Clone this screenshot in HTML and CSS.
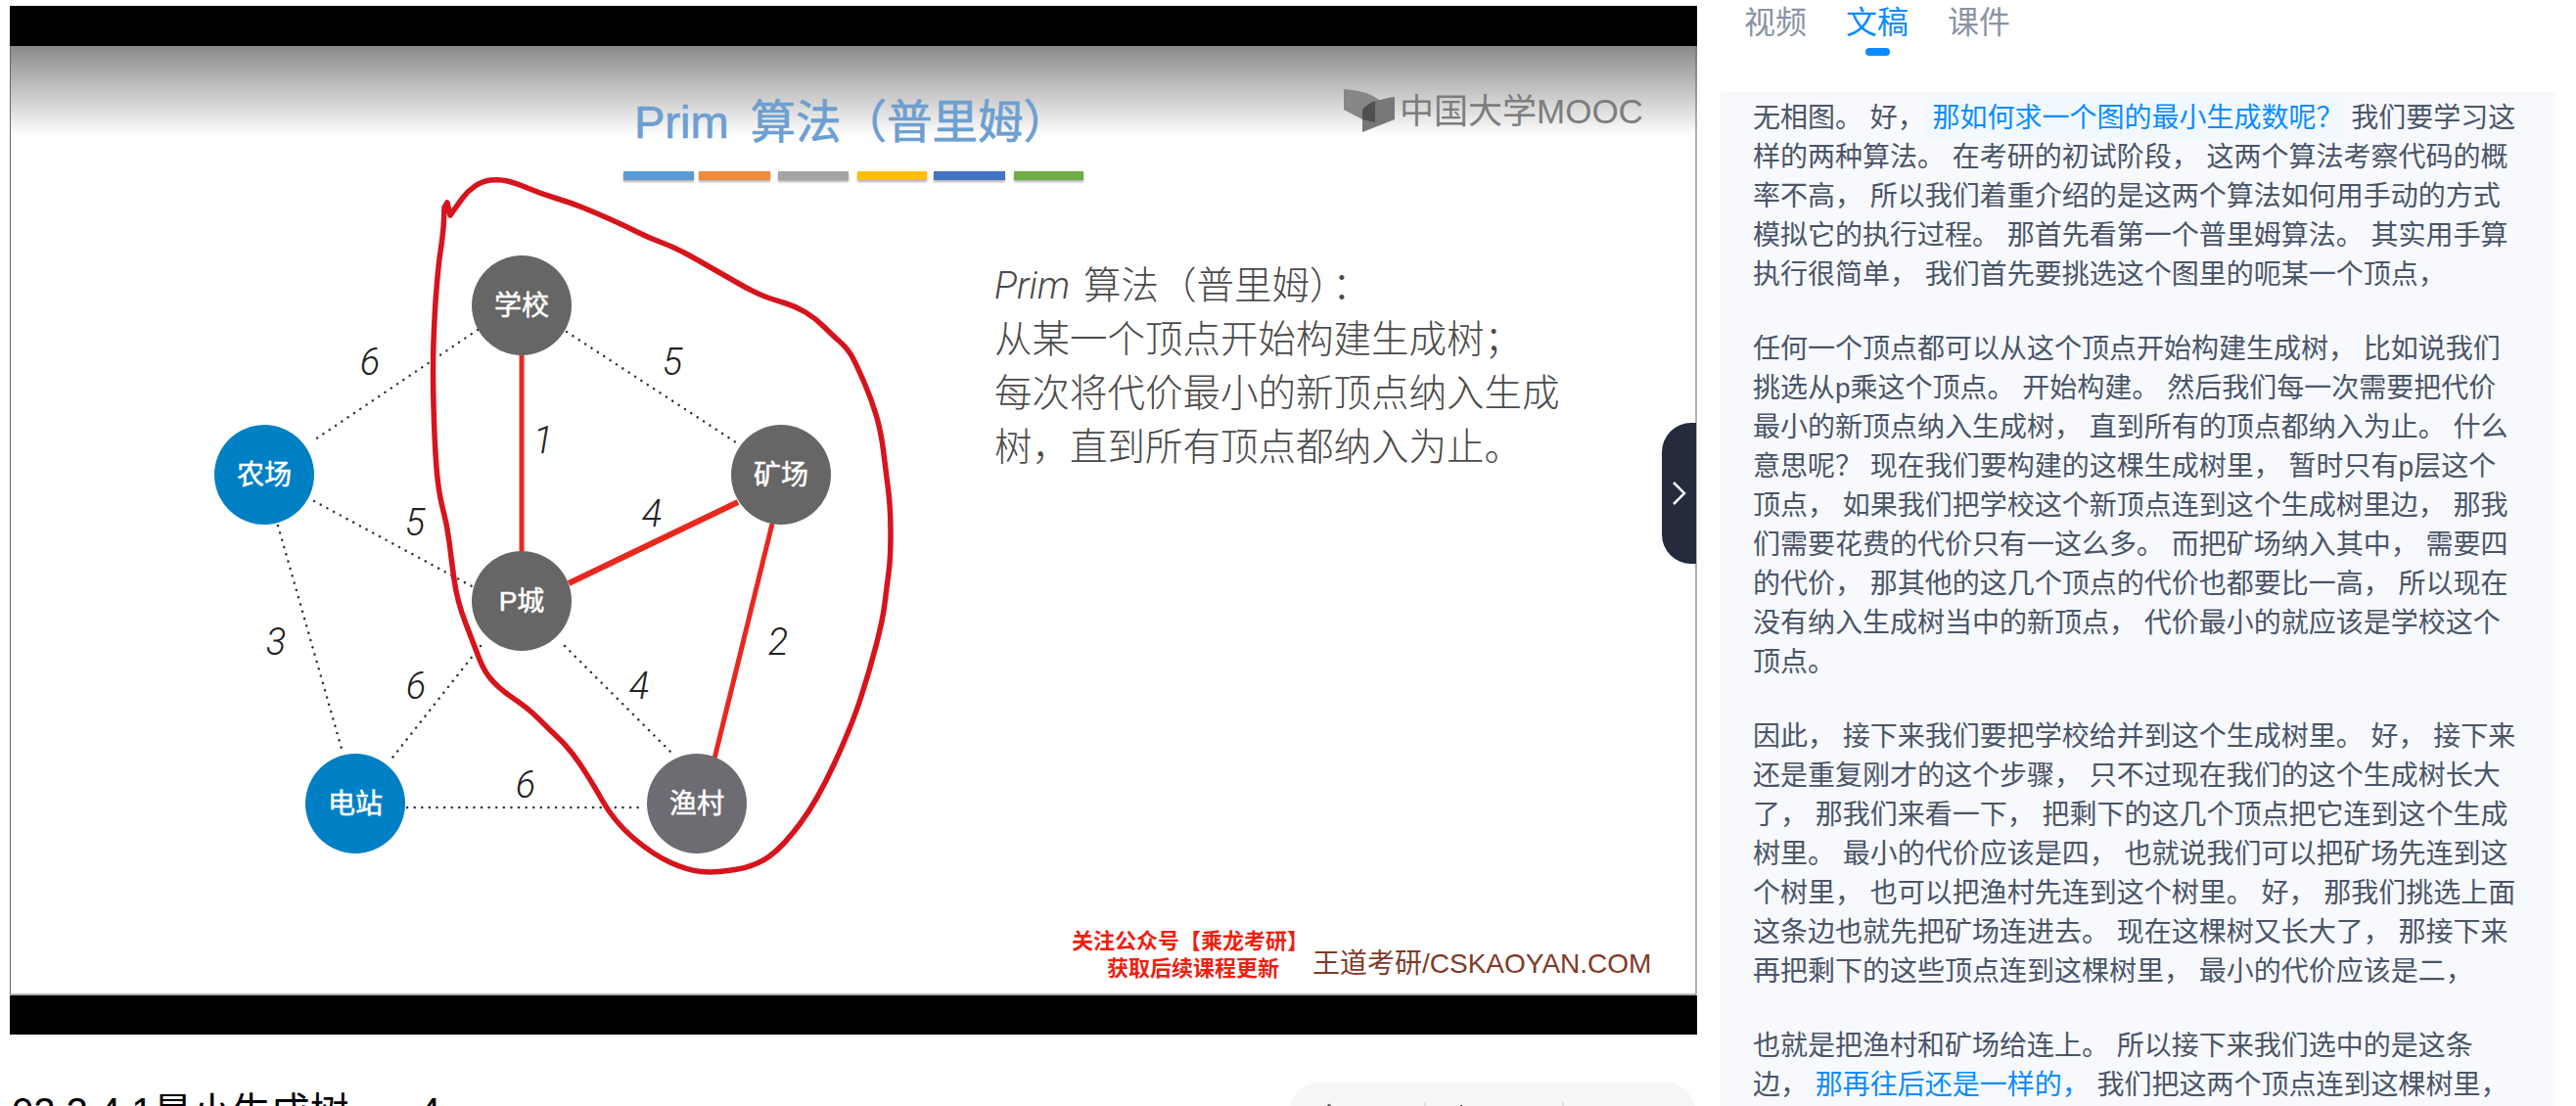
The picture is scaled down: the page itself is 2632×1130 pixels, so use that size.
FILE: index.html
```html
<!DOCTYPE html>
<html lang="zh-CN">

<head>
    <meta charset="UTF-8">
    <title>02.2.4.1最小生成树</title>
    <link rel="stylesheet" href="styles.css">
</head>

<body>
    <div class="page">
        <main class="lesson">
            <div class="player">
                <!-- viewBox uses page coordinates so the slide is easy to compare -->
                <svg class="slide" viewBox="10 47 1724 970" width="1724" height="970">
                    <defs>
                        <linearGradient id="slide-top" x1="0" y1="0" x2="0" y2="1">
                            <stop offset="0" stop-color="#8a8a8a" />
                            <stop offset="0.5" stop-color="#c4c4c4" />
                            <stop offset="1" stop-color="#ffffff" />
                        </linearGradient>
                    </defs>
                    <rect x="10" y="47" width="1724" height="970" fill="#fff" />
                    <rect x="10" y="47" width="1724" height="92" fill="url(#slide-top)" />
                    <path class="slide-edge" d="M10.5 47V1016H1733V47" />

                    <text class="slide-title" x="648" y="141"><tspan class="title-latin">Prim</tspan><tspan dx="22">算法（普里姆）</tspan></text>
                    <g class="title-bars">
                        <rect x="637" y="175" width="72" height="9" fill="#5b9bd5" />
                        <rect x="714" y="175" width="73" height="9" fill="#ed8b3a" />
                        <rect x="795" y="175" width="72" height="9" fill="#a5a5a5" />
                        <rect x="876" y="175" width="71" height="9" fill="#ffc000" />
                        <rect x="954" y="175" width="73" height="9" fill="#4472c4" />
                        <rect x="1036" y="175" width="71" height="9" fill="#70ad47" />
                    </g>

                    <g class="logo-mark">
                        <path d="M1373 91Q1396 92 1411 103L1392 122L1373 112Z" fill="#868686" />
                        <path d="M1392 135V112Q1402 102 1425 99V122Z" fill="#777" />
                        <path d="M1392 112Q1397 106 1405 103V125L1392 122Z" fill="#505050" />
                    </g>
                    <text class="logo-text" x="1430" y="126">中国大学MOOC</text>

                    <!-- dotted edges -->
                    <g class="edges-dotted">
                        <line x1="488" y1="337" x2="319" y2="451" />
                        <line x1="579" y1="339" x2="752" y2="452" />
                        <line x1="321" y1="512" x2="484" y2="600" />
                        <line x1="284" y1="537" x2="349" y2="765" />
                        <line x1="491" y1="660" x2="401" y2="774" />
                        <line x1="577" y1="660" x2="688" y2="771" />
                        <line x1="416" y1="825" x2="653" y2="825" />
                    </g>

                    <!-- chosen edges -->
                    <g class="edges-chosen">
                        <line x1="533" y1="362" x2="533" y2="563" />
                        <line class="edge-thick" x1="581" y1="596" x2="754" y2="513" />
                        <line x1="789" y1="535" x2="730" y2="775" />
                    </g>

                    <g class="nodes">
                        <circle cx="533" cy="312" r="51" class="node-done" />
                        <circle cx="270" cy="485" r="51" class="node-new" />
                        <circle cx="798" cy="485" r="51" class="node-done" />
                        <circle cx="533" cy="614" r="51" class="node-done" />
                        <circle cx="363" cy="821" r="51" class="node-new" />
                        <circle cx="712" cy="821" r="51" class="node-done node-last" />
                    </g>
                    <g class="node-labels">
                        <text x="533" y="322">学校</text>
                        <text x="270" y="495">农场</text>
                        <text x="798" y="495">矿场</text>
                        <text x="533" y="624">P城</text>
                        <text x="363" y="831">电站</text>
                        <text x="712" y="831">渔村</text>
                    </g>

                    <g class="weights">
                        <text x="378" y="383">6</text>
                        <text x="687" y="383">5</text>
                        <text x="555" y="463">1</text>
                        <text x="424" y="547">5</text>
                        <text x="666" y="538">4</text>
                        <text x="282" y="669">3</text>
                        <text x="795" y="669">2</text>
                        <text x="425" y="714">6</text>
                        <text x="653" y="714">4</text>
                        <text x="537" y="815">6</text>
                    </g>

                    <!-- hand drawn outline -->
                    <path class="scribble" d="M460 220Q467 210 472.5 202.5Q478 195 485.5 190Q493 185 501.5 184Q510 183 518.5 185Q527 187 540 192.5Q553 198 568 202.5Q583 207 596.5 212.5Q610 218 623.5 224Q637 230 650 236.5Q663 243 676.5 248Q690 253 703.5 260.5Q717 268 730 275.5Q743 283 758 291.5Q773 300 783 303.5Q793 307 803 310Q813 313 823 319Q833 325 841.5 333.5Q850 342 858.5 349.5Q867 357 872 367Q877 377 883.5 392Q890 407 895 423.5Q900 440 902.5 460Q905 480 907.5 500Q910 520 910 545Q910 570 908 585Q906 600 904 616.5Q902 633 895 660Q888 687 879 714.5Q870 742 852.5 780Q835 818 817.5 841.5Q800 865 786 875Q772 885 751 888.5Q730 892 716 890.5Q702 889 684.5 881Q667 873 647.5 856.5Q628 840 615.5 818Q603 796 592.5 780.5Q582 765 571.5 755Q561 745 550.5 734.5Q540 724 526 714.5Q512 705 503.5 696Q495 687 489.5 672.5Q484 658 475.5 636Q467 614 464 592Q461 570 459 553.5Q457 537 452.5 520Q448 503 446 478Q444 453 443 415Q442 377 443 348.5Q444 320 446 295Q448 270 450.5 253.5Q453 237 453.5 224.5L454 212L457 207L460 220" />

                    <g class="slide-body">
                        <text x="1016" y="305"><tspan class="prim">Prim</tspan><tspan dx="14">算法（普里姆）</tspan><tspan dx="4">：</tspan></text>
                        <text x="1016" y="360">从某一个顶点开始构建生成树；</text>
                        <text x="1016" y="415">每次将代价最小的新顶点纳入生成</text>
                        <text x="1016" y="470">树，直到所有顶点都纳入为止。</text>
                    </g>

                    <g class="promo">
                        <text x="1216" y="969">关注公众号【乘龙考研】</text>
                        <text x="1219" y="997">获取后续课程更新</text>
                    </g>
                    <text class="site-mark" x="1341" y="994">王道考研/CSKAOYAN.COM</text>
                </svg>

                <button class="panel-toggle" type="button" aria-label="收起">
                    <svg width="16" height="26" viewBox="0 0 16 26">
                        <path d="M2 2L13 13L2 24" />
                    </svg>
                </button>
            </div>

            <div class="lesson-bar">
                <h1>02.2.4.1最小生成树 <span class="part">- 4</span></h1>
                <div class="actions">
                    <span class="action action-share">
                        <svg class="action-icon" width="24" height="24" viewBox="0 0 24 24">
                            <path d="M12 2L12 20M5 9L12 2L19 9" />
                        </svg>
                        分享
                    </span>
                    <span class="action action-save">
                        <svg class="action-icon" width="24" height="24" viewBox="0 0 24 24">
                            <path d="M12 2L12 18M5 11L12 18L19 11M3 22H21" />
                        </svg>
                        下载
                    </span>
                    <span class="action action-more">更多</span>
                </div>
            </div>
        </main>

        <aside class="side">
            <nav class="tabs">
                <a class="tab">视频</a>
                <a class="tab active">文稿</a>
                <a class="tab">课件</a>
            </nav>

            <section class="transcript">
                <p>无相图。 好，<span class="mark"> 那如何求一个图的最小生成数呢？</span> 我们要学习这样的两种算法。 在考研的初试阶段， 这两个算法考察代码的概率不高， 所以我们着重介绍的是这两个算法如何用手动的方式模拟它的执行过程。 那首先看第一个普里姆算法。 其实用手算执行很简单， 我们首先要挑选这个图里的呃某一个顶点，</p>
                <p>任何一个顶点都可以从这个顶点开始构建生成树， 比如说我们挑选从p乘这个顶点。 开始构建。 然后我们每一次需要把代价最小的新顶点纳入生成树， 直到所有的顶点都纳入为止。 什么意思呢？ 现在我们要构建的这棵生成树里， 暂时只有p层这个顶点， 如果我们把学校这个新顶点连到这个生成树里边， 那我们需要花费的代价只有一这么多。 而把矿场纳入其中， 需要四的代价， 那其他的这几个顶点的代价也都要比一高， 所以现在没有纳入生成树当中的新顶点， 代价最小的就应该是学校这个顶点。</p>
                <p>因此， 接下来我们要把学校给并到这个生成树里。 好， 接下来还是重复刚才的这个步骤， 只不过现在我们的这个生成树长大了， 那我们来看一下， 把剩下的这几个顶点把它连到这个生成树里。 最小的代价应该是四， 也就说我们可以把矿场先连到这个树里， 也可以把渔村先连到这个树里。 好， 那我们挑选上面这条边也就先把矿场连进去。 现在这棵树又长大了， 那接下来再把剩下的这些顶点连到这棵树里， 最小的代价应该是二，</p>
                <p>也就是把渔村和矿场给连上。 所以接下来我们选中的是这条边， <span class="link">那再往后还是一样的，</span> 我们把这两个顶点连到这棵树里，</p>
            </section>
        </aside>
    </div>
</body>

</html>
```

FILE: styles.css
```css
html,
body {
    margin: 0;
    height: 100%;
    overflow: hidden;
    background: #fff;
}

body {
    font-family: "Liberation Sans", "Noto Sans CJK SC", sans-serif;
}

.page {
    display: flex;
    align-items: flex-start;
    height: 1130px;
    overflow: hidden;
}

/* left column */
.lesson {
    width: 1724px;
    margin-left: 10px;
    padding-top: 6px;
    flex-shrink: 0;
}

.player {
    position: relative;
    height: 1051px;
    padding-top: 41px;
    box-sizing: border-box;
    background: #000;
}

.slide {
    display: block;
}

.slide-edge {
    fill: none;
    stroke: #666;
    stroke-width: 1;
}

.slide-title {
    font-size: 46.5px;
    fill: #6d9fd0;
    stroke: #6d9fd0;
    stroke-width: 0.7px;
}

.title-latin {
    font-size: 47px;
}

.title-bars {
    filter: drop-shadow(0 2px 1px rgba(0, 0, 0, 0.3));
}

.logo-text {
    font-size: 35px;
    fill: #7d7d7d;
}

.edges-dotted line {
    stroke: #333;
    stroke-width: 2.5;
    stroke-linecap: round;
    stroke-dasharray: 0.1 7.5;
}

.edges-chosen line {
    stroke: #e8281e;
    stroke-width: 5;
}

.edges-chosen .edge-thick {
    stroke-width: 6;
}

.node-done {
    fill: #666;
}

.node-last {
    fill: #6c6c72;
}

.node-new {
    fill: #0080c4;
}

.node-labels text {
    font-size: 28px;
    font-weight: 400;
    fill: #fff;
    stroke: #fff;
    stroke-width: 0.5px;
    text-anchor: middle;
}

.weights text {
    font-family: "Roboto", "Liberation Sans", sans-serif;
    font-size: 38px;
    font-style: italic;
    font-weight: 300;
    fill: #222;
    text-anchor: middle;
}

.scribble {
    fill: none;
    stroke: #d7141c;
    stroke-width: 5.5;
    stroke-linejoin: round;
    stroke-linecap: round;
}

.slide-body text {
    font-size: 38.5px;
    font-weight: 300;
    fill: #4a4a4a;
}

.prim {
    font-family: "Roboto", "Liberation Sans", sans-serif;
    font-style: italic;
    font-weight: 300;
}

.promo text {
    font-size: 22px;
    font-weight: 700;
    fill: #f01e10;
    text-anchor: middle;
}

.site-mark {
    font-size: 28px;
    fill: #7f3a28;
}

.panel-toggle {
    position: absolute;
    right: 1px;
    top: 426px;
    display: flex;
    align-items: center;
    justify-content: center;
    width: 35px;
    height: 144px;
    padding: 0;
    border: none;
    border-radius: 30px 0 0 30px;
    background: #232b3c;
}

.panel-toggle path {
    fill: none;
    stroke: #fff;
    stroke-width: 2.5;
}

.lesson-bar {
    display: flex;
    justify-content: space-between;
    align-items: flex-start;
    margin-top: 49px;
}

.lesson-bar h1 {
    margin: 2px 0 0 2px;
    font-size: 40px;
    font-weight: 400;
    line-height: 56px;
    color: #000;
    white-space: pre;
}

.part {
    margin-left: 36px;
}

.actions {
    display: flex;
    align-items: flex-start;
    width: 416px;
    height: 80px;
    box-sizing: border-box;
    border-radius: 32px;
    background: #f6f6f7;
    margin-right: 1px;
    padding-top: 20px;
}

.action {
    display: flex;
    align-items: flex-start;
    height: 40px;
    box-sizing: border-box;
    font-size: 29px;
    line-height: 42px;
    color: #555;
}

.action-icon {
    margin-top: 1px;
}

.action-icon path {
    fill: none;
    stroke: currentColor;
    stroke-width: 2;
}

.action-share {
    width: 140px;
    padding-left: 29px;
    gap: 22px;
    border-right: 2px solid #dcdce4;
}

.action-save {
    width: 141px;
    padding-left: 24px;
    gap: 16px;
    color: #333;
    border-right: 2px solid #dcdce4;
}

.action-more {
    padding-left: 63px;
    color: #000;
}

/* right column */
.side {
    width: 852px;
    margin-left: 24px;
    flex-shrink: 0;
}

.tabs {
    display: flex;
    gap: 40px;
    height: 94px;
    padding-left: 24px;
    padding-top: 1px;
    box-sizing: border-box;
}

.tab {
    position: relative;
    height: 44px;
    font-size: 32px;
    line-height: 44px;
    color: #8a93a3;
}

.tab.active {
    color: #0a8cff;
}

.tab.active::after {
    content: "";
    position: absolute;
    left: 20px;
    top: 48px;
    width: 25px;
    height: 8px;
    border-radius: 4px;
    background: #0a8cff;
}

.transcript {
    height: 1036px;
    padding: 7px 35px 0 33px;
    box-sizing: border-box;
    overflow: hidden;
    background: #f7f9fd;
    font-size: 28px;
    line-height: 40px;
    color: #4a5568;
}

.transcript p {
    margin: 0 0 36px;
}

.mark {
    padding: 6px 0;
    background: #f2f9fe;
    color: #0a8cff;
}

.link {
    color: #0a8cff;
}
```
